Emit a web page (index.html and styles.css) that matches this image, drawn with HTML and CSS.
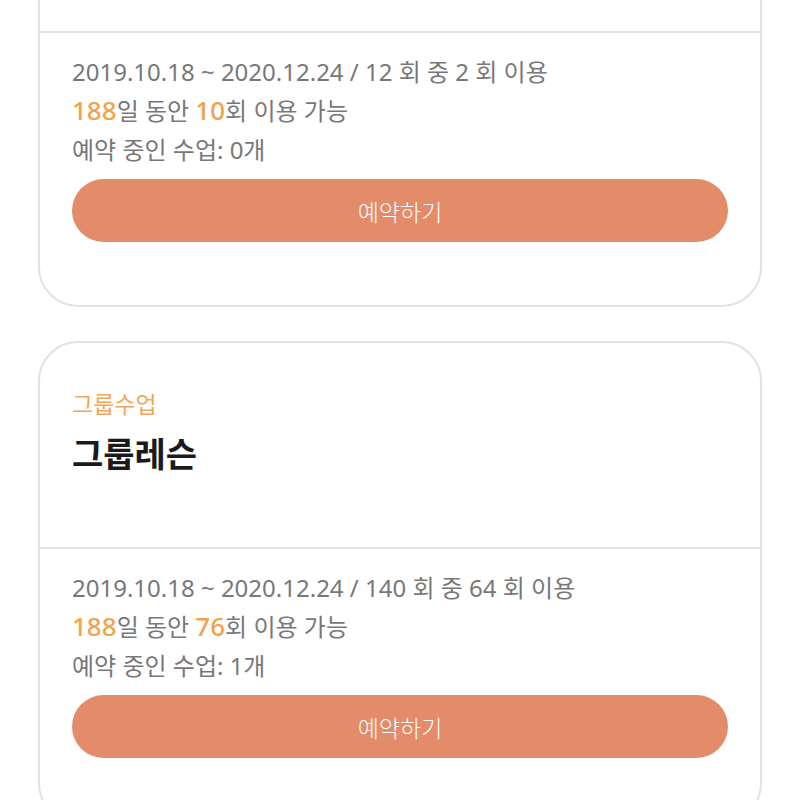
FILE: index.html
```html
<!DOCTYPE html>
<html lang="ko">
<head>
<meta charset="utf-8">
<link rel="stylesheet" href="styles.css">
</head>
<body>
<div class="list">
  <div class="card">
    <div class="card-head card-head-hidden"></div>
    <div class="card-body">
      <p class="line">2019.10.18 ~ 2020.12.24 / 12 회 중 2 회 이용</p>
      <p class="line"><span class="num">188</span>일 동안 <span class="num">10</span>회 이용 가능</p>
      <p class="line">예약 중인 수업: 0개</p>
      <button class="btn">예약하기</button>
    </div>
  </div>
  <div class="card">
    <div class="card-head">
      <div class="label">그룹수업</div>
      <div class="title">그룹레슨</div>
    </div>
    <div class="card-body">
      <p class="line">2019.10.18 ~ 2020.12.24 / 140 회 중 64 회 이용</p>
      <p class="line"><span class="num">188</span>일 동안 <span class="num">76</span>회 이용 가능</p>
      <p class="line">예약 중인 수업: 1개</p>
      <button class="btn">예약하기</button>
    </div>
  </div>
</div>
</body>
</html>
```
FILE: styles.css
```css
* { box-sizing: border-box; }
html, body { margin: 0; padding: 0; background: #ffffff; }
body {
  font-family: "Noto Sans", "Noto Sans CJK KR", sans-serif;
  overflow: hidden;
}
.list {
  display: flex;
  flex-direction: column;
  gap: 34px;
  padding: 0 38px;
  margin-top: -175px;
}
.card {
  border: 2px solid #e2e2e2;
  border-radius: 40px;
  background: #fff;
}
.card-head {
  padding: 46px 32px 71px;
}
.card-head-hidden {
  height: 204px;
}
.label {
  font-size: 23px;
  line-height: 30px;
  color: #f2a65a;
}
.title {
  margin-top: 13px;
  font-size: 34px;
  line-height: 44px;
  font-weight: 700;
  color: #1a1a1a;
}
.card-body {
  border-top: 2px solid #e4e4e4;
  padding: 19px 32px 63px;
}
.line {
  margin: 0;
  font-size: 24px;
  line-height: 39px;
  height: 39px;
  color: #787878;
}
.num {
  color: #f3a24c;
  font-size: 26px;
  font-weight: 500;
}
.btn {
  display: block;
  width: 100%;
  margin-top: 10px;
  height: 63px;
  border: none;
  border-radius: 32px;
  background: #e48b6a;
  color: #fff;
  font-family: inherit;
  font-size: 23px;
  font-weight: 300;
}
```
